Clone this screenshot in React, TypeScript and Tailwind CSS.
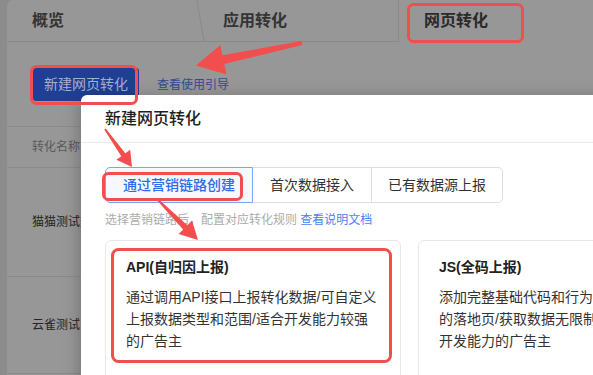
type Pt = [number, number];

// tapered arrow polygon: thin tail, wider shaft, triangular head
function arrow(tail: Pt, tip: Pt, tailW: number, shaftW: number, headLen: number, headW: number) {
  const dx = tip[0] - tail[0];
  const dy = tip[1] - tail[1];
  const len = Math.hypot(dx, dy);
  const ux = dx / len;
  const uy = dy / len;
  const px = -uy;
  const py = ux;
  const bx = tip[0] - ux * headLen;
  const by = tip[1] - uy * headLen;
  const pts: Pt[] = [
    [tail[0] + px * tailW / 2, tail[1] + py * tailW / 2],
    [bx + px * shaftW / 2, by + py * shaftW / 2],
    [bx + px * headW / 2, by + py * headW / 2],
    tip,
    [bx - px * headW / 2, by - py * headW / 2],
    [bx - px * shaftW / 2, by - py * shaftW / 2],
    [tail[0] - px * tailW / 2, tail[1] - py * tailW / 2],
  ];
  return pts.map((p) => `${p[0].toFixed(1)},${p[1].toFixed(1)}`).join(' ');
}

function Annotations() {
  const red = '#f24e4e';
  return (
    <svg className="pointer-events-none absolute inset-0" width={593} height={375}>
      <rect x={408.5} y={4.5} width={114} height={37} rx={5} fill="none" stroke={red} strokeWidth={3} />
      <rect x={31.5} y={66.5} width={105} height={37} rx={5} fill="none" stroke={red} strokeWidth={3} />
      <rect x={103.5} y={173.5} width={138} height={26} rx={5} fill="none" stroke={red} strokeWidth={3} />
      <rect x={112.5} y={249.5} width={278} height={112} rx={6} fill="none" stroke={red} strokeWidth={3} />
      <polygon points={arrow([302, 43], [196, 65.5], 4, 9, 28, 30)} fill={red} />
      <polygon points={arrow([105, 129], [132, 167], 2, 5, 15, 17)} fill={red} />
      <polygon points={arrow([158, 200], [198, 240], 2, 6, 18, 19)} fill={red} />
    </svg>
  );
}

function PageBehind() {
  return (
    <div className="flex h-full">
      <div className="w-[7px] shrink-0 bg-[#8c8c8c]" />
      <div className="flex flex-1 flex-col rounded-tl-[6px] bg-[#979797]">
        <div className="relative flex h-[42px] shrink-0 text-[16px] font-semibold text-[#343434]">
          <div className="flex w-[193px] items-center border-b border-[#8a8a8a] pl-[25px]">概览</div>
          <div className="flex w-[199px] items-center border-b border-r border-[#8a8a8a] pl-[23px]">应用转化</div>
          <div className="flex items-center pl-[25px] text-[#2a2a2a]">网页转化</div>
          <svg className="absolute left-[189px] top-0" width={10} height={42}>
            <line x1={1} y1={0} x2={8} y2={41} stroke="#8a8a8a" strokeWidth={1} />
          </svg>
        </div>

        <div className="flex h-[84px] shrink-0 items-start gap-[18px] pl-[26px] pt-[26px]">
          <button className="h-[33px] rounded-[3px] bg-[#1f3f95] px-[11px] text-[14px] text-[#a7afca]">
            新建网页转化
          </button>
          <span className="pt-[8px] text-[12px] text-[#2f4b94]">查看使用引导</span>
        </div>

        <div className="border-t border-[#8b8b8b] text-[12px]">
          <div className="flex h-[41px] items-center border-b border-[#8b8b8b] pl-[25px] text-[#5a5a5a]">转化名称</div>
          <div className="flex h-[109px] items-center border-b border-[#8b8b8b] pl-[25px] text-[#242424]">猫猫测试数据</div>
          <div className="flex h-[97px] items-center border-b border-[#8b8b8b] pl-[25px] text-[#242424]">云雀测试</div>
        </div>
      </div>
    </div>
  );
}

function Modal() {
  return (
    <div className="absolute left-[81px] top-[95px] h-[320px] w-[580px] rounded-tl-[6px] bg-white shadow-[0_4px_18px_rgba(0,0,0,0.28)]">
      <div className="flex h-[48px] items-center border-b border-[#ebebeb] px-6 text-[16px] font-medium text-[#1f1f1f]">
        新建网页转化
      </div>
      <div className="px-6 pt-6">
        <div className="flex h-[36px] text-[14px]">
          <div className="flex items-center rounded-l-[5px] border border-[#7ea2f5] bg-[#f5f8ff] px-[17px] font-medium text-[#2e6be6]">
            通过营销链路创建
          </div>
          <div className="flex items-center border-y border-r border-[#dcdee3] px-[17px] text-[#333]">首次数据接入</div>
          <div className="flex items-center rounded-r-[5px] border-y border-r border-[#dcdee3] px-[16px] text-[#333]">
            已有数据源上报
          </div>
        </div>
        <div className="mt-2 text-[12px] leading-[18px] text-[#ababab]">
          选择营销链路后，配置对应转化规则 <span className="text-[#4d7ff5]">查看说明文档</span>
        </div>
        <div className="mt-[11px] grid grid-cols-[296px_296px] gap-[17px]">
          <div className="h-[160px] rounded-[6px] border border-[#e8e8e8] px-5 pt-[15px]">
            <div className="text-[14px] font-semibold leading-[22px] text-[#222]">API(自归因上报)</div>
            <div className="mt-2 text-[14px] leading-[22px] text-[#333]">
              通过调用API接口上报转化数据/可自定义上报数据类型和范围/适合开发能力较强的广告主
            </div>
          </div>
          <div className="h-[160px] rounded-[6px] border border-[#e8e8e8] px-5 pt-[15px]">
            <div className="text-[14px] font-semibold leading-[22px] text-[#222]">JS(全码上报)</div>
            <div className="mt-2 whitespace-nowrap text-[14px] leading-[22px] text-[#333]">
              <div>添加完整基础代码和行为代码到需要监测</div>
              <div>的落地页/获取数据无限制/适合具备一定</div>
              <div>开发能力的广告主</div>
            </div>
          </div>
        </div>
      </div>
    </div>
  );
}

export default function App() {
  return (
    <div className="relative h-[375px] w-[593px] overflow-hidden bg-[#8c8c8c] font-['Liberation_Sans','Noto_Sans_CJK_SC',sans-serif]">
      <PageBehind />
      <Modal />
      <Annotations />
    </div>
  );
}
